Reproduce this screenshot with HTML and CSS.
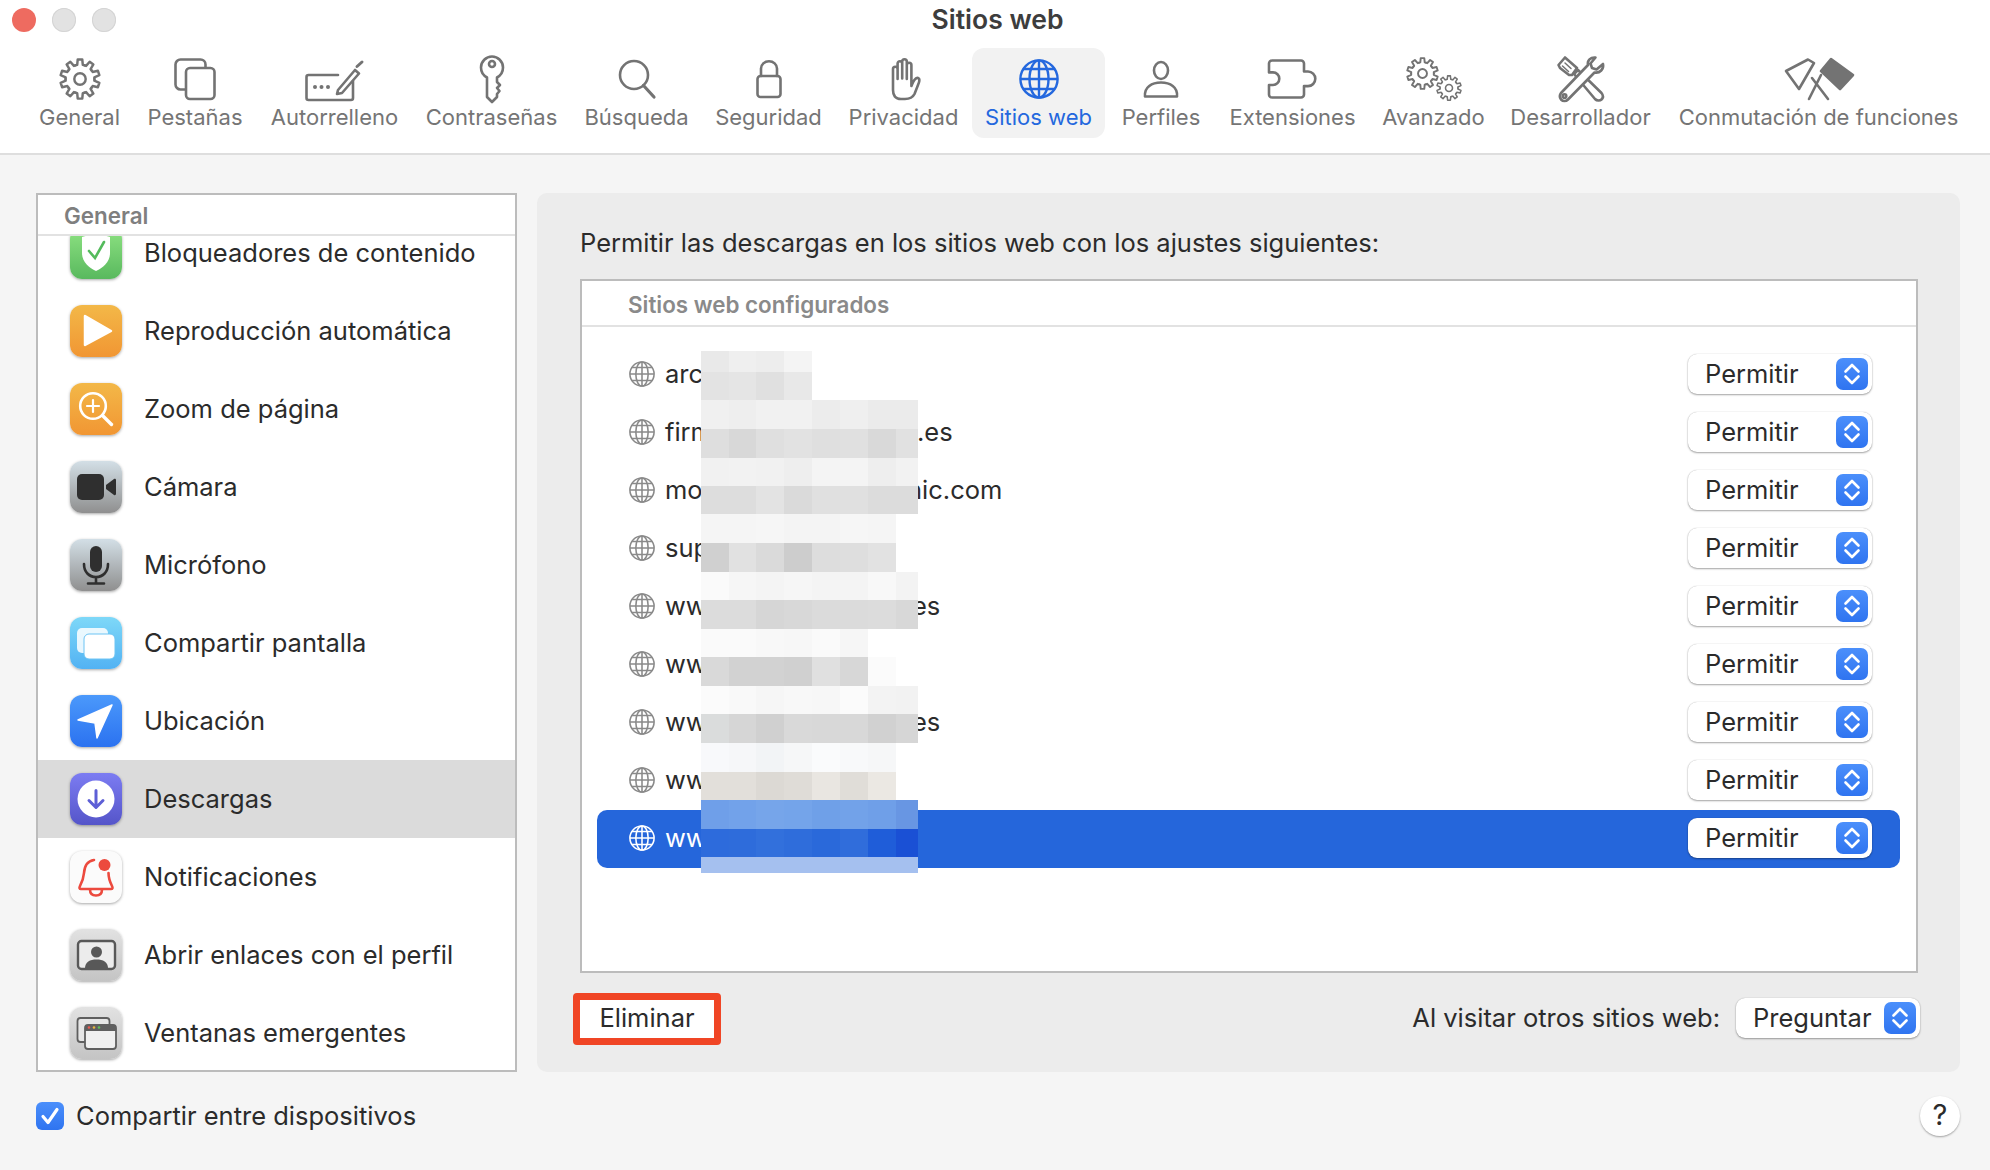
FILE: index.html
```html
<!DOCTYPE html>
<html>
  <head>
    <title>Sitios web</title>
    <link rel="stylesheet" href="styles.css">
  </head>
  <body>
    <svg class="sprite" aria-hidden="true">
      <symbol id="gear" viewBox="-24 -24 48 48">
        <path id="tooth" class="gear-line" d="M-5.100 -15.700L-3.200 -16.200L-2.600 -22.400L2.600 -22.400L3.200 -16.200L5.100 -15.700"/>
        <use href="#tooth" transform="rotate(36)"/>
        <use href="#tooth" transform="rotate(72)"/>
        <use href="#tooth" transform="rotate(108)"/>
        <use href="#tooth" transform="rotate(144)"/>
        <use href="#tooth" transform="rotate(180)"/>
        <use href="#tooth" transform="rotate(216)"/>
        <use href="#tooth" transform="rotate(252)"/>
        <use href="#tooth" transform="rotate(288)"/>
        <use href="#tooth" transform="rotate(324)"/>
        <circle class="gear-line" r="6.500"/>
      </symbol>
      <symbol id="globe" viewBox="0 0 40 40">
        <g fill="none" stroke="currentColor" stroke-width="2.400">
          <circle cx="20" cy="20" r="18.6"/>
          <ellipse cx="20" cy="20" rx="9.500" ry="18.6"/>
          <path d="M20 1.400V38.600M1.400 20H38.600M4.400 10H35.600M4.400 30H35.600"/>
        </g>
      </symbol>
      <symbol id="updown" viewBox="0 0 32 32">
        <path d="M9.500 13.500L16 7L22.500 13.500M9.500 18.500L16 25L22.500 18.500" fill="none" stroke="#fff" stroke-width="2.600" stroke-linecap="round" stroke-linejoin="round"/>
      </symbol>
    </svg>

    <header class="window-head">
      <div class="titlebar">
        <div class="lights">
          <span class="light light-close"></span>
          <span class="light"></span>
          <span class="light"></span>
        </div>
        <div class="window-title">Sitios web</div>
      </div>

      <nav class="toolbar">
        <div class="tool">
          <svg class="tool-icon" width="42" height="42"><use href="#gear"/></svg>
          <span>General</span>
        </div>
        <div class="tool">
          <svg class="tool-icon" width="42" height="42" viewBox="0 0 42 42">
            <rect x="1.500" y="1.500" width="30" height="30" rx="5"/>
            <rect class="solid-white" x="12" y="10" width="28.500" height="31" rx="4"/>
          </svg>
          <span>Pestañas</span>
        </div>
        <div class="tool">
          <svg class="tool-icon" width="60" height="48" viewBox="0 0 60 48">
            <path d="M33 20H3.500a2 2 0 0 0-2 2V43a2 2 0 0 0 2 2H46a2 2 0 0 0 2-2V26"/>
            <circle class="dot" cx="10" cy="32" r="2"/>
            <circle class="dot" cx="16.500" cy="32" r="2"/>
            <circle class="dot" cx="23" cy="32" r="2"/>
            <path d="M33 35L50 15L54 18.500L37 38L32 39Z"/>
            <path d="M52 11.500L57 7" stroke-width="3"/>
          </svg>
          <span>Autorrelleno</span>
        </div>
        <div class="tool">
          <svg class="tool-icon" width="28" height="48" viewBox="0 0 28 48">
            <path d="M14 1.500C20 1.500 25 6.500 25 12.500C25 17 22.500 20.500 19 22.500V27L22 30L19 33L21.500 36L19 39V42L14 47L9 42V22.500C5.500 20.500 3 17 3 12.500C3 6.500 8 1.500 14 1.500Z"/>
            <circle cx="14" cy="9" r="3"/>
          </svg>
          <span>Contraseñas</span>
        </div>
        <div class="tool">
          <svg class="tool-icon" width="38" height="38" viewBox="0 0 38 38">
            <circle cx="16" cy="15" r="14"/>
            <path d="M25.500 25.500L36 37" stroke-width="3.200"/>
          </svg>
          <span>Búsqueda</span>
        </div>
        <div class="tool">
          <svg class="tool-icon" width="26" height="38" viewBox="0 0 26 38">
            <rect x="1.500" y="16" width="23" height="21" rx="3"/>
            <path d="M5 16V8.500a8 7.300 0 0 1 16 0V16"/>
          </svg>
          <span>Seguridad</span>
        </div>
        <div class="tool">
          <svg class="tool-icon" width="34" height="42" viewBox="0 0 34 42">
            <path d="M6 25V11a2.300 2.300 0 0 1 4.600 0V21V5.500a2.300 2.300 0 0 1 4.600 0V20.500V3.500a2.300 2.300 0 0 1 4.600 0V21V7a2.300 2.300 0 0 1 4.600 0V28C26 23.500 28.500 19 31 20C33.500 21 32 24.500 31 27L27.500 36C25.500 40 22 41 18 41H14C8 41 6 37 6 32Z"/>
          </svg>
          <span>Privacidad</span>
        </div>
        <div class="tool tool-active">
          <svg class="tool-globe" width="40" height="40"><use href="#globe"/></svg>
          <span>Sitios web</span>
        </div>
        <div class="tool">
          <svg class="tool-icon" width="36" height="37" viewBox="0 0 36 37">
            <ellipse cx="18" cy="9.500" rx="7" ry="8.500"/>
            <path d="M2 35.500C1 26 9 21.500 18 21.500C27 21.500 35 26 34 35.500Z"/>
          </svg>
          <span>Perfiles</span>
        </div>
        <div class="tool">
          <svg class="tool-icon" width="50" height="40" viewBox="0 0 50 40">
            <path d="M4 1.500H33a3 3 0 0 1 3 3V12.500H40a7.300 7.300 0 0 1 0 14.600H36V35.500a3 3 0 0 1-3 3H4a3 3 0 0 1-3-3V26H5a6.300 6.300 0 0 0 0-12.600H1V4.500a3 3 0 0 1 3-3Z"/>
          </svg>
          <span>Extensiones</span>
        </div>
        <div class="tool">
          <svg class="tool-icon" width="56" height="44" viewBox="0 0 56 44">
            <use href="#gear" x="0" y="0" width="33" height="33"/>
            <use href="#gear" x="30" y="18" width="26" height="26"/>
          </svg>
          <span>Avanzado</span>
        </div>
        <div class="tool">
          <svg class="tool-icon" width="48" height="46" viewBox="0 0 48 46">
            <path d="M1.500 9L8 1.500L20 12L15 19L12 19L3 12Z"/>
            <path d="M8 7L14 12.500M5.500 10L11.500 15.500" stroke-width="1.500"/>
            <path d="M17 18L21 14L44.500 37C46.500 39.500 46 42 44.500 43.500C43 45 40 45 38 43Z"/>
            <path class="solid-white" d="M31 9C30 4.500 33.500 1 38.500 1.500L33.500 7.500L35 12L39.500 13.500L46 8C47 13 43 17.500 37.500 16.500L11 43.500C9 45.500 6 45.500 4 43.500C2.500 41.500 2.500 39 4 37Z"/>
            <circle cx="7.500" cy="40" r="1.800"/>
          </svg>
          <span>Desarrollador</span>
        </div>
        <div class="tool">
          <svg class="tool-icon" width="72" height="42" viewBox="0 0 72 42">
            <path d="M3 13L25 1.500L31 5L16 31Z"/>
            <path class="solid-grey" d="M38 13L48 1L70 17L57 31Z"/>
            <path d="M26 41L38 17M45 41L29 20"/>
          </svg>
          <span>Conmutación de funciones</span>
        </div>
      </nav>
    </header>

    <main class="content">
      <aside class="sidebar">
        <div class="sidebar-head">General</div>
        <div class="sidebar-list">
          <div class="side-row">
            <div class="app-icon bg-green">
              <svg width="52" height="52" viewBox="0 0 52 52">
                <path d="M26 6L40 10V26C40 35 33 41 26 44C19 41 12 35 12 26V10Z" fill="#fff"/>
                <path d="M19 24L25 31L34 15" fill="none" stroke="#54bb5c" stroke-width="2.600" stroke-linecap="round"/>
              </svg>
            </div>
            <span>Bloqueadores de contenido</span>
          </div>
          <div class="side-row">
            <div class="app-icon bg-orange">
              <svg width="52" height="52" viewBox="0 0 52 52">
                <path d="M15 11L41 26L15 40Z" fill="#fff" stroke="#fff" stroke-width="2.500" stroke-linejoin="round"/>
              </svg>
            </div>
            <span>Reproducción automática</span>
          </div>
          <div class="side-row">
            <div class="app-icon bg-orange">
              <svg width="52" height="52" viewBox="0 0 52 52" fill="none" stroke="#fff">
                <circle cx="23" cy="23" r="12.800" stroke-width="2.600"/>
                <path d="M32.500 32.500L41.500 41.500" stroke-width="3.400" stroke-linecap="round"/>
                <path d="M23 17V29M17 23H29" stroke-width="2.200" stroke-linecap="round"/>
              </svg>
            </div>
            <span>Zoom de página</span>
          </div>
          <div class="side-row">
            <div class="app-icon bg-steel">
              <svg width="52" height="52" viewBox="0 0 52 52">
                <rect x="7" y="13" width="27" height="26" rx="5" fill="#2f2f2f"/>
                <path d="M36 24L44 18C45 17.500 46 18 46 19V33C46 34 45 34.500 44 34L36 28Z" fill="#2f2f2f"/>
              </svg>
            </div>
            <span>Cámara</span>
          </div>
          <div class="side-row">
            <div class="app-icon bg-steel">
              <svg width="52" height="52" viewBox="0 0 52 52">
                <rect x="20" y="7" width="12" height="26" rx="6" fill="#2f2f2f"/>
                <path d="M14 25C14 33 19 38 26 38C33 38 38 33 38 25M26 38V44M18 44.500H34" fill="none" stroke="#2f2f2f" stroke-width="2.600" stroke-linecap="round"/>
              </svg>
            </div>
            <span>Micrófono</span>
          </div>
          <div class="side-row">
            <div class="app-icon bg-sky">
              <svg width="52" height="52" viewBox="0 0 52 52">
                <rect x="7" y="11" width="31" height="25" rx="5" fill="#fff" fill-opacity=".85"/>
                <rect x="14" y="17" width="31" height="25" rx="5" fill="#fff" stroke="#6cc4f4" stroke-width="1"/>
              </svg>
            </div>
            <span>Compartir pantalla</span>
          </div>
          <div class="side-row">
            <div class="app-icon bg-blue">
              <svg width="52" height="52" viewBox="0 0 52 52">
                <path d="M42 10L8 25L25 28L27 43Z" fill="#fff" stroke="#fff" stroke-width="1.500" stroke-linejoin="round"/>
              </svg>
            </div>
            <span>Ubicación</span>
          </div>
          <div class="side-row side-row-selected">
            <div class="app-icon bg-violet">
              <svg width="52" height="52" viewBox="0 0 52 52">
                <circle cx="26" cy="26" r="18.500" fill="#fff"/>
                <path d="M26 17.500V34M19 27.500L26 34.500L33 27.500" fill="none" stroke="#5d5fd6" stroke-width="3" stroke-linecap="round" stroke-linejoin="round"/>
              </svg>
            </div>
            <span>Descargas</span>
          </div>
          <div class="side-row">
            <div class="app-icon bg-white">
              <svg width="52" height="52" viewBox="0 0 52 52">
                <path d="M24 9C17 10 14.500 15 14 22C13.500 28 12 31 10 35C9 37 9.500 38 11 38H41C42.500 38 43 37 42 35C40 31 38.500 28 38.500 22" fill="none" stroke="#ec4a3e" stroke-width="2.600" stroke-linecap="round" stroke-linejoin="round"/>
                <path d="M20 38.500C20 43 23 44.500 26 44.500C29 44.500 32 43 32 38.500" fill="none" stroke="#ec4a3e" stroke-width="2.600"/>
                <circle cx="34.500" cy="14" r="6" fill="#ec4a3e"/>
              </svg>
            </div>
            <span>Notificaciones</span>
          </div>
          <div class="side-row">
            <div class="app-icon bg-grey">
              <svg width="52" height="52" viewBox="0 0 52 52">
                <rect x="8" y="12" width="37" height="28" rx="3.500" fill="#ececec" stroke="#585858" stroke-width="2.400"/>
                <circle cx="26.500" cy="23" r="5.500" fill="#585858"/>
                <path d="M15 39C15 33 20 30.500 26.500 30.500C33 30.500 38 33 38 39Z" fill="#585858"/>
              </svg>
            </div>
            <span>Abrir enlaces con el perfil</span>
          </div>
          <div class="side-row">
            <div class="app-icon bg-grey">
              <svg width="52" height="52" viewBox="0 0 52 52">
                <rect x="7.500" y="11" width="32" height="24" rx="3" fill="#e6e6e6" stroke="#5f5f5f" stroke-width="1.800"/>
                <rect x="15" y="18" width="31" height="24" rx="3" fill="#f0f0f0" stroke="#5f5f5f" stroke-width="1.800"/>
                <path d="M15 21a3 3 0 0 1 3-3H43a3 3 0 0 1 3 3V24H15Z" fill="#5f5f5f"/>
                <circle cx="19" cy="20.500" r="1.300" fill="#ec5a50"/>
                <circle cx="24" cy="20.500" r="1.300" fill="#e9b73d"/>
                <circle cx="29" cy="20.500" r="1.300" fill="#5fbf58"/>
              </svg>
            </div>
            <span>Ventanas emergentes</span>
          </div>
        </div>
      </aside>

      <section class="panel">
        <div class="panel-text">Permitir las descargas en los sitios web con los ajustes siguientes:</div>

        <div class="sites">
          <div class="sites-head">Sitios web configurados</div>
          <div class="sites-list">
            <div class="site-row">
              <svg class="globe" width="26" height="26"><use href="#globe"/></svg>
              <span class="host">arc</span>
              <div class="select"><span>Permitir</span><svg class="stepper" width="32" height="32"><use href="#updown"/></svg></div>
            </div>
            <div class="site-row">
              <svg class="globe" width="26" height="26"><use href="#globe"/></svg>
              <span class="host">firm</span><span class="tail">.es</span>
              <div class="select"><span>Permitir</span><svg class="stepper" width="32" height="32"><use href="#updown"/></svg></div>
            </div>
            <div class="site-row">
              <svg class="globe" width="26" height="26"><use href="#globe"/></svg>
              <span class="host">mo</span><span class="tail tail-com">nic.com</span>
              <div class="select"><span>Permitir</span><svg class="stepper" width="32" height="32"><use href="#updown"/></svg></div>
            </div>
            <div class="site-row">
              <svg class="globe" width="26" height="26"><use href="#globe"/></svg>
              <span class="host">sup</span>
              <div class="select"><span>Permitir</span><svg class="stepper" width="32" height="32"><use href="#updown"/></svg></div>
            </div>
            <div class="site-row">
              <svg class="globe" width="26" height="26"><use href="#globe"/></svg>
              <span class="host">www</span><span class="tail tail-es">es</span>
              <div class="select"><span>Permitir</span><svg class="stepper" width="32" height="32"><use href="#updown"/></svg></div>
            </div>
            <div class="site-row">
              <svg class="globe" width="26" height="26"><use href="#globe"/></svg>
              <span class="host">www</span>
              <div class="select"><span>Permitir</span><svg class="stepper" width="32" height="32"><use href="#updown"/></svg></div>
            </div>
            <div class="site-row">
              <svg class="globe" width="26" height="26"><use href="#globe"/></svg>
              <span class="host">www</span><span class="tail tail-es">es</span>
              <div class="select"><span>Permitir</span><svg class="stepper" width="32" height="32"><use href="#updown"/></svg></div>
            </div>
            <div class="site-row">
              <svg class="globe" width="26" height="26"><use href="#globe"/></svg>
              <span class="host">www</span>
              <div class="select"><span>Permitir</span><svg class="stepper" width="32" height="32"><use href="#updown"/></svg></div>
            </div>
            <div class="site-row site-row-selected">
              <svg class="globe" width="26" height="26"><use href="#globe"/></svg>
              <span class="host">www</span>
              <div class="select"><span>Permitir</span><svg class="stepper" width="32" height="32"><use href="#updown"/></svg></div>
            </div>
          </div>

          <!-- pixelated block hiding the domain names -->
          <svg class="mosaic" width="217" height="522" viewBox="701 351 217 522" shape-rendering="crispEdges">
            <g>
              <rect x="701" y="351" width="28" height="21" fill="#e9e9e9"/><rect x="729" y="351" width="27" height="21" fill="#efefef"/><rect x="756" y="351" width="28" height="21" fill="#ededed"/><rect x="784" y="351" width="28" height="21" fill="#f4f4f4"/>
              <rect x="701" y="372" width="28" height="28" fill="#e3e3e3"/><rect x="729" y="372" width="27" height="28" fill="#e5e5e5"/><rect x="756" y="372" width="28" height="28" fill="#e0e0e0"/><rect x="784" y="372" width="28" height="28" fill="#e8e8e8"/>
              <rect x="701" y="400" width="28" height="29" fill="#f0f0f0"/><rect x="729" y="400" width="27" height="29" fill="#eeeeee"/><rect x="756" y="400" width="28" height="29" fill="#f1f1f1"/><rect x="784" y="400" width="28" height="29" fill="#f1f1f1"/><rect x="812" y="400" width="28" height="29" fill="#ececec"/><rect x="840" y="400" width="28" height="29" fill="#efefef"/><rect x="868" y="400" width="28" height="29" fill="#ebebeb"/><rect x="896" y="400" width="22" height="29" fill="#ebebeb"/>
              <rect x="701" y="429" width="28" height="29" fill="#dedede"/><rect x="729" y="429" width="27" height="29" fill="#d8d8d8"/><rect x="756" y="429" width="28" height="29" fill="#dfdfdf"/><rect x="784" y="429" width="28" height="29" fill="#e2e2e2"/><rect x="812" y="429" width="28" height="29" fill="#dfdfdf"/><rect x="840" y="429" width="28" height="29" fill="#e0e0e0"/><rect x="868" y="429" width="28" height="29" fill="#d9d9d9"/><rect x="896" y="429" width="22" height="29" fill="#e1e1e1"/>
              <rect x="701" y="458" width="28" height="28" fill="#f1f1f1"/><rect x="729" y="458" width="27" height="28" fill="#f2f2f2"/><rect x="756" y="458" width="28" height="28" fill="#f1f1f1"/><rect x="784" y="458" width="28" height="28" fill="#eeeeee"/><rect x="812" y="458" width="28" height="28" fill="#f4f4f4"/><rect x="840" y="458" width="28" height="28" fill="#f4f4f4"/><rect x="868" y="458" width="28" height="28" fill="#eeeeee"/><rect x="896" y="458" width="22" height="28" fill="#f2f2f2"/>
              <rect x="701" y="486" width="28" height="28" fill="#dddddd"/><rect x="729" y="486" width="27" height="28" fill="#dddddd"/><rect x="756" y="486" width="28" height="28" fill="#e3e3e3"/><rect x="784" y="486" width="28" height="28" fill="#dadada"/><rect x="812" y="486" width="28" height="28" fill="#e0e0e0"/><rect x="840" y="486" width="28" height="28" fill="#e0e0e0"/><rect x="868" y="486" width="28" height="28" fill="#dcdcdc"/><rect x="896" y="486" width="22" height="28" fill="#dcdcdc"/>
              <rect x="701" y="514" width="28" height="29" fill="#f5f5f5"/><rect x="729" y="514" width="27" height="29" fill="#f5f5f5"/><rect x="756" y="514" width="28" height="29" fill="#f6f6f6"/><rect x="784" y="514" width="28" height="29" fill="#f4f4f4"/><rect x="812" y="514" width="28" height="29" fill="#f4f4f4"/><rect x="840" y="514" width="28" height="29" fill="#f6f6f6"/><rect x="868" y="514" width="28" height="29" fill="#f5f5f5"/>
              <rect x="701" y="543" width="28" height="29" fill="#d0d0d0"/><rect x="729" y="543" width="27" height="29" fill="#e1e1e1"/><rect x="756" y="543" width="28" height="29" fill="#dadada"/><rect x="784" y="543" width="28" height="29" fill="#cdcdcd"/><rect x="812" y="543" width="28" height="29" fill="#dddddd"/><rect x="840" y="543" width="28" height="29" fill="#dedede"/><rect x="868" y="543" width="28" height="29" fill="#e2e2e2"/>
              <rect x="701" y="572" width="28" height="28" fill="#fafafa"/><rect x="729" y="572" width="27" height="28" fill="#f6f6f6"/><rect x="756" y="572" width="28" height="28" fill="#f4f4f4"/><rect x="784" y="572" width="28" height="28" fill="#f6f6f6"/><rect x="812" y="572" width="28" height="28" fill="#f4f4f4"/><rect x="840" y="572" width="28" height="28" fill="#f4f4f4"/><rect x="868" y="572" width="28" height="28" fill="#f8f8f8"/><rect x="896" y="572" width="22" height="28" fill="#f3f3f3"/>
              <rect x="701" y="600" width="28" height="29" fill="#dcdcdc"/><rect x="729" y="600" width="27" height="29" fill="#dcdcdc"/><rect x="756" y="600" width="28" height="29" fill="#d6d6d6"/><rect x="784" y="600" width="28" height="29" fill="#d8d8d8"/><rect x="812" y="600" width="28" height="29" fill="#dbdbdb"/><rect x="840" y="600" width="28" height="29" fill="#dbdbdb"/><rect x="868" y="600" width="28" height="29" fill="#dcdcdc"/><rect x="896" y="600" width="22" height="29" fill="#d8d8d8"/>
              <rect x="701" y="629" width="28" height="28" fill="#fafafa"/><rect x="729" y="629" width="27" height="28" fill="#fafafa"/><rect x="756" y="629" width="28" height="28" fill="#f8f8f8"/><rect x="784" y="629" width="28" height="28" fill="#f7f7f7"/><rect x="812" y="629" width="28" height="28" fill="#fafafa"/><rect x="840" y="629" width="28" height="28" fill="#f6f6f6"/>
              <rect x="701" y="657" width="28" height="29" fill="#d9d9d9"/><rect x="729" y="657" width="27" height="29" fill="#d2d2d2"/><rect x="756" y="657" width="28" height="29" fill="#d2d2d2"/><rect x="784" y="657" width="28" height="29" fill="#d0d0d0"/><rect x="812" y="657" width="28" height="29" fill="#e0e0e0"/><rect x="840" y="657" width="28" height="29" fill="#d7d7d7"/><rect x="868" y="657" width="28" height="29" fill="#fbfbfb"/>
              <rect x="701" y="686" width="28" height="28" fill="#fbfbfb"/><rect x="729" y="686" width="27" height="28" fill="#f9f9f9"/><rect x="756" y="686" width="28" height="28" fill="#f6f6f6"/><rect x="784" y="686" width="28" height="28" fill="#f8f8f8"/><rect x="812" y="686" width="28" height="28" fill="#f7f7f7"/><rect x="840" y="686" width="28" height="28" fill="#fbfbfb"/><rect x="868" y="686" width="28" height="28" fill="#f3f3f3"/><rect x="896" y="686" width="22" height="28" fill="#f2f2f2"/>
              <rect x="701" y="714" width="28" height="29" fill="#dadcdc"/><rect x="729" y="714" width="27" height="29" fill="#d6d6d6"/><rect x="756" y="714" width="28" height="29" fill="#d0d0d0"/><rect x="784" y="714" width="28" height="29" fill="#d9d9d9"/><rect x="812" y="714" width="28" height="29" fill="#d8d8d8"/><rect x="840" y="714" width="28" height="29" fill="#d8d8d8"/><rect x="868" y="714" width="28" height="29" fill="#d1d1d1"/><rect x="896" y="714" width="22" height="29" fill="#d6d6d6"/>
              <rect x="701" y="743" width="28" height="29" fill="#f8f9fb"/><rect x="729" y="743" width="27" height="29" fill="#f6f7f9"/><rect x="756" y="743" width="28" height="29" fill="#f2f4f6"/><rect x="784" y="743" width="28" height="29" fill="#f6f7f8"/><rect x="812" y="743" width="28" height="29" fill="#fafbfc"/><rect x="840" y="743" width="28" height="29" fill="#f8f9fa"/><rect x="868" y="743" width="28" height="29" fill="#f6f7f8"/>
              <rect x="701" y="772" width="28" height="28" fill="#e2dfda"/><rect x="729" y="772" width="27" height="28" fill="#e2dfda"/><rect x="756" y="772" width="28" height="28" fill="#dcd9d4"/><rect x="784" y="772" width="28" height="28" fill="#dfdcd7"/><rect x="812" y="772" width="28" height="28" fill="#e9e6e1"/><rect x="840" y="772" width="28" height="28" fill="#e0ddd8"/><rect x="868" y="772" width="28" height="28" fill="#ebe8e3"/>
              <rect x="701" y="800" width="28" height="29" fill="#6f9fe9"/><rect x="729" y="800" width="27" height="29" fill="#72a2ea"/><rect x="756" y="800" width="28" height="29" fill="#76a5ea"/><rect x="784" y="800" width="28" height="29" fill="#74a4ea"/><rect x="812" y="800" width="28" height="29" fill="#6fa0e8"/><rect x="840" y="800" width="28" height="29" fill="#72a2e9"/><rect x="868" y="800" width="28" height="29" fill="#6f9fe8"/><rect x="896" y="800" width="22" height="29" fill="#6896e3"/>
              <rect x="701" y="829" width="28" height="28" fill="#2d6bdc"/><rect x="729" y="829" width="27" height="28" fill="#2e6cdb"/><rect x="756" y="829" width="28" height="28" fill="#3270dc"/><rect x="784" y="829" width="28" height="28" fill="#2f6ddb"/><rect x="812" y="829" width="28" height="28" fill="#2a69da"/><rect x="840" y="829" width="28" height="28" fill="#306ddb"/><rect x="868" y="829" width="28" height="28" fill="#1f5dd9"/><rect x="896" y="829" width="22" height="28" fill="#1a50d5"/>
              <rect x="701" y="857" width="217" height="16" fill="#a5c0ef"/>
            </g>
          </svg>
        </div>

        <div class="panel-foot">
          <button class="remove-btn">Eliminar</button>
          <div class="other-sites">
            <span>Al visitar otros sitios web:</span>
            <div class="select"><span>Preguntar</span><svg class="stepper" width="32" height="32"><use href="#updown"/></svg></div>
          </div>
        </div>
      </section>
    </main>

    <footer class="bottom-bar">
      <label class="share">
        <span class="checkbox">
          <svg width="28" height="28" viewBox="0 0 28 28">
            <path d="M7 14.500L12 20.500L21 7.500" fill="none" stroke="#fff" stroke-width="3.200" stroke-linecap="round" stroke-linejoin="round"/>
          </svg>
        </span>
        <span class="share-label">Compartir entre dispositivos</span>
      </label>
      <button class="help">?</button>
    </footer>
  </body>
</html>
```

FILE: styles.css
```css
html, body {
  margin: 0;
  padding: 0;
}

body {
  width: 1990px;
  height: 1170px;
  overflow: hidden;
  background-color: #f5f5f5;
  color: #2b2b2b;
  font-family: Inter, "Liberation Sans", sans-serif;
  font-size: 25.5px;
}

.sprite {
  position: absolute;
  width: 0;
  height: 0;
}

.gear-line {
  fill: none;
  stroke: #737373;
  stroke-width: 2.8;
  stroke-linejoin: round;
  stroke-linecap: round;
}

/* window top */
.window-head {
  height: 153px;
  background-color: #fff;
  border-bottom: 2px solid #dedede;
}

.titlebar {
  display: flex;
  align-items: center;
  justify-content: center;
  height: 38px;
  position: relative;
}

.lights {
  position: absolute;
  left: 12px;
  top: 8px;
  display: flex;
  gap: 16px;
}

.light {
  width: 24px;
  height: 24px;
  border-radius: 50%;
  background-color: #e2e2e2;
  box-shadow: inset 0 0 0 1px #d4d4d4;
}

.light-close {
  background-color: #ee6b60;
  box-shadow: none;
}

.window-title {
  margin-left: 5px;
  font-size: 26.5px;
  font-weight: 600;
  color: #3d3d3d;
}

.toolbar {
  display: grid;
  grid-template-columns: 107px 124px 155px 159px 131px 133px 137px 133px 112px 151px 131px 163px 313px;
  margin: 10px 0 0 26px;
}

.tool {
  display: grid;
  grid-template-rows: 48px 28px;
  justify-items: center;
  align-items: center;
  height: 90px;
  box-sizing: border-box;
  padding-top: 7px;
  border-radius: 12px;
  color: #757575;
  font-size: 22px;
  white-space: nowrap;
}

.tool svg {
  overflow: visible;
}

.tool span {
  line-height: 26px;
}

.tool-active {
  background-color: #f2f2f2;
  color: #2468de;
}

.tool-icon {
  fill: none;
  stroke: #737373;
  stroke-width: 2.6;
  stroke-linejoin: round;
  stroke-linecap: round;
}

.tool-icon .dot {
  fill: #737373;
  stroke: none;
}

.tool-icon .solid-white {
  fill: #fff;
}

.tool-icon .solid-grey {
  fill: #737373;
}

.tool-globe {
  color: #2468de;
}

/* main area */
.content {
  display: flex;
  gap: 20px;
  padding: 38px 30px 0 36px;
}

.sidebar {
  width: 481px;
  height: 879px;
  box-sizing: border-box;
  background-color: #fff;
  border: 2px solid #bcbcbc;
  display: flex;
  flex-direction: column;
}

.sidebar-head {
  flex: none;
  height: 41px;
  line-height: 42px;
  padding-left: 26px;
  box-sizing: border-box;
  border-bottom: 2px solid #e2e2e2;
  font-size: 22.4px;
  font-weight: 600;
  color: #7f7f7f;
}

.sidebar-list {
  flex: 1;
  overflow: hidden;
}

.side-row {
  display: flex;
  align-items: center;
  gap: 22px;
  height: 78px;
  padding-left: 32px;
}

.side-row span {
  margin-bottom: 2px;
}

.side-row:first-child {
  margin-top: -22px;
}

.side-row-selected {
  background-color: #dbdbdb;
}

.app-icon {
  flex: none;
  width: 52px;
  height: 52px;
  border-radius: 12px;
  box-shadow: 0 1px 3px rgba(0, 0, 0, 0.35);
}

.app-icon svg {
  display: block;
}

.bg-green { background: linear-gradient(#8fe383, #59b95e); }
.bg-orange { background: linear-gradient(#f3b848, #f19633); }
.bg-steel { background: linear-gradient(#d3dfe6, #8f8f8f); }
.bg-sky { background: linear-gradient(#7ed8f8, #52b2f3); }
.bg-blue { background: linear-gradient(#4b99fb, #2b72f0); }
.bg-violet { background: linear-gradient(#7c7cf2, #5555c9); }
.bg-white { background: #fbfbfb; }
.bg-grey { background: linear-gradient(#e2e2e2, #c4c4c4); }

.panel {
  width: 1423px;
  height: 879px;
  box-sizing: border-box;
  padding: 35px 42px 0 43px;
  background-color: #ececec;
  border-radius: 10px;
}

.panel-text {
  line-height: 30px;
  margin-bottom: 21px;
}

.sites {
  position: relative;
  height: 694px;
  box-sizing: border-box;
  background-color: #fff;
  border: 2px solid #bcbcbc;
}

.sites-head {
  height: 46px;
  line-height: 48px;
  box-sizing: border-box;
  padding-left: 46px;
  border-bottom: 2px solid #e2e2e2;
  font-size: 22.4px;
  font-weight: 600;
  color: #8a8a8a;
}

.sites-list {
  padding: 19px 16px 0 15px;
}

.site-row {
  display: flex;
  align-items: center;
  height: 58px;
  box-sizing: border-box;
  padding: 0 28px 3px 32px;
  border-radius: 10px;
}

.site-row-selected {
  background-color: #2566db;
  color: #fff;
}

.globe {
  flex: none;
  color: #8a8a8a;
  margin-right: 10px;
}

.site-row-selected .globe {
  color: #fff;
}

.host {
  width: 252px;
}

.tail-com {
  margin-left: -10px;
}

.tail-es {
  margin-left: -5px;
}

.select {
  display: flex;
  align-items: center;
  justify-content: space-between;
  width: 184px;
  height: 40px;
  box-sizing: border-box;
  padding: 0 4px 0 17px;
  margin-left: auto;
  background-color: #fff;
  color: #2b2b2b;
  border-radius: 9px;
  box-shadow: 0 1px 2px rgba(0, 0, 0, 0.35), 0 0 1px rgba(0, 0, 0, 0.25);
}

.stepper {
  flex: none;
  border-radius: 7px;
  background: linear-gradient(#4b8ffb, #2f74f0);
}

.mosaic {
  position: absolute;
  left: 119px;
  top: 70px;
}

.panel-foot {
  display: flex;
  align-items: center;
  justify-content: space-between;
  margin: 20px -2px 0 -7px;
}

.remove-btn {
  width: 148px;
  height: 52px;
  box-sizing: border-box;
  border: 7px solid #f04525;
  border-radius: 4px;
  background-color: #fff;
  color: #2b2b2b;
  font: inherit;
  padding: 0 0 3px;
}

.other-sites {
  display: flex;
  align-items: center;
  gap: 16px;
  margin-top: -3px;
}

.other-sites .select {
  margin-left: 0;
}

.bottom-bar {
  display: flex;
  align-items: center;
  justify-content: space-between;
  height: 40px;
  margin-top: 24px;
  padding: 0 30px 0 36px;
}

.share {
  display: flex;
  align-items: center;
  gap: 12px;
}

.share-label {
  margin-bottom: 2px;
}

.checkbox {
  width: 28px;
  height: 28px;
  border-radius: 6px;
  background: linear-gradient(#4b8ffb, #2f74f0);
}

.checkbox svg {
  display: block;
}

.help {
  width: 40px;
  height: 40px;
  padding: 0 0 3px;
  border: none;
  border-radius: 50%;
  background-color: #fff;
  color: #2b2b2b;
  font: inherit;
  font-size: 29px;
  box-shadow: 0 1px 2px rgba(0, 0, 0, 0.35);
}
```
